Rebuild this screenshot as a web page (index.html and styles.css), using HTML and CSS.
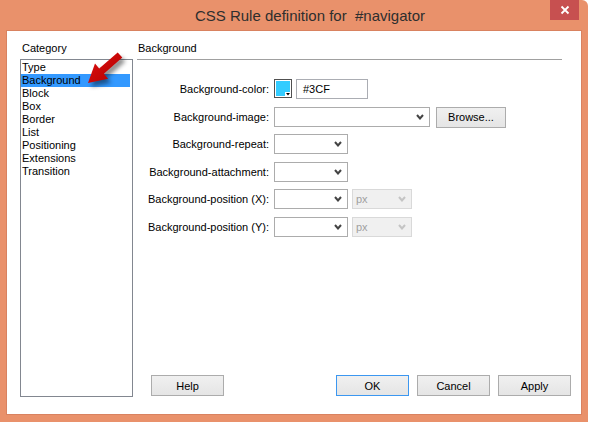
FILE: index.html
```html
<!DOCTYPE html>
<html>
<head>
<meta charset="utf-8">
<link rel="stylesheet" href="styles.css">
</head>
<body>
<div class="window">
  <div class="titlebar">
    <div class="title">CSS Rule definition for&nbsp; #navigator</div>
    <div class="close"><svg width="10" height="10" viewBox="0 0 10 10"><path d="M1.5 1.5 L8.5 8.5 M8.5 1.5 L1.5 8.5" stroke="#fff" stroke-width="1.8"/></svg></div>
  </div>
  <div class="client">
    <div class="left">
      <div class="label">Category</div>
      <ul class="list">
        <li>Type</li>
        <li class="sel">Background</li>
        <li>Block</li>
        <li>Box</li>
        <li>Border</li>
        <li>List</li>
        <li>Positioning</li>
        <li>Extensions</li>
        <li>Transition</li>
      </ul>
    </div>
    <div class="right">
      <div class="heading">Background</div>
      <div class="form">
        <div class="flabel">Background-color:</div>
        <div class="ctrls">
          <svg class="swatch" width="18" height="19" viewBox="0 0 18 19"><rect x="0.5" y="0.5" width="17" height="18" fill="#fff" stroke="#505050"/><rect x="2" y="2" width="14" height="15" fill="#33ccff"/><rect x="11" y="13" width="6" height="5" fill="#fff"/><path d="M12 14 L16 14 L14 16.5 Z" fill="#000"/></svg>
          <div class="input w72">#3CF</div>
        </div>
        <div class="flabel">Background-image:</div>
        <div class="ctrls">
          <div class="select w156"><span></span><svg width="8" height="6" viewBox="0 0 8 6"><polyline points="1,1 4,4.5 7,1" fill="none" stroke="#444" stroke-width="2"/></svg></div>
          <div class="btn browse">Browse...</div>
        </div>
        <div class="flabel">Background-repeat:</div>
        <div class="ctrls">
          <div class="select w74"><span></span><svg width="8" height="6" viewBox="0 0 8 6"><polyline points="1,1 4,4.5 7,1" fill="none" stroke="#444" stroke-width="2"/></svg></div>
        </div>
        <div class="flabel">Background-attachment:</div>
        <div class="ctrls">
          <div class="select w74"><span></span><svg width="8" height="6" viewBox="0 0 8 6"><polyline points="1,1 4,4.5 7,1" fill="none" stroke="#444" stroke-width="2"/></svg></div>
        </div>
        <div class="flabel">Background-position (X):</div>
        <div class="ctrls">
          <div class="select w74"><span></span><svg width="8" height="6" viewBox="0 0 8 6"><polyline points="1,1 4,4.5 7,1" fill="none" stroke="#444" stroke-width="2"/></svg></div>
          <div class="select w60 disabled"><span>px</span><svg width="8" height="6" viewBox="0 0 8 6"><polyline points="1,1 4,4.5 7,1" fill="none" stroke="#c4c4c4" stroke-width="2"/></svg></div>
        </div>
        <div class="flabel">Background-position (Y):</div>
        <div class="ctrls">
          <div class="select w74"><span></span><svg width="8" height="6" viewBox="0 0 8 6"><polyline points="1,1 4,4.5 7,1" fill="none" stroke="#444" stroke-width="2"/></svg></div>
          <div class="select w60 disabled"><span>px</span><svg width="8" height="6" viewBox="0 0 8 6"><polyline points="1,1 4,4.5 7,1" fill="none" stroke="#c4c4c4" stroke-width="2"/></svg></div>
        </div>
      </div>
      <div class="buttons">
        <div class="btn">Help</div>
        <div class="group">
          <div class="btn default">OK</div>
          <div class="btn">Cancel</div>
          <div class="btn">Apply</div>
        </div>
      </div>
    </div>
  </div>
  <svg class="arrow" width="50" height="46" viewBox="0 0 50 46">
    <defs>
      <linearGradient id="ag" x1="0" y1="0" x2="1" y2="1">
        <stop offset="0" stop-color="#e01010"/>
        <stop offset="1" stop-color="#b00000"/>
      </linearGradient>
    </defs>
    <polygon points="8,35 28.1,30.7 23.9,25.8 42.3,9.6 37.7,4.4 19.2,20.5 15,15.6" fill="url(#ag)"/>
  </svg>
</div>
</body>
</html>
```

FILE: styles.css
```css
body {
  margin: 0;
  background: #ffffff;
  font-family: "Liberation Sans", Arial, sans-serif;
  font-size: 11px;
  color: #000;
}

.window {
  position: relative;
  width: 588px;
  height: 422px;
  background: #e9916b;
  border-radius: 0 6px 0 0;
  display: flex;
  flex-direction: column;
}

.titlebar {
  height: 31px;
  display: flex;
  flex: none;
}

.title {
  flex: 1;
  padding-left: 70px;
  text-align: center;
  font-size: 15px;
  line-height: 32px;
  color: #2e2e2e;
}

.close {
  width: 29px;
  height: 20px;
  margin-right: 9px;
  background: #c75050;
  display: flex;
  align-items: center;
  justify-content: center;
}

.client {
  margin: 0 7px;
  height: 383px;
  box-sizing: border-box;
  background: #fff;
  box-shadow: 0 0 0 1px #d98260;
  display: flex;
  padding: 11px 10px 17px 13px;
}

.left {
  width: 113px;
  display: flex;
  flex-direction: column;
}

.label {
  line-height: 13px;
  padding-left: 2px;
}

.list {
  list-style: none;
  margin: 4px 0 0 0;
  padding: 1px 1px 1px 0;
  border: 1px solid #828790;
  flex: 1;
}

.list li {
  line-height: 13px;
  padding-left: 1px;
  margin-right: 1px;
}

.list li.sel {
  background: #3399ff;
}

.right {
  margin-left: 4px;
  flex: 1;
  display: flex;
  flex-direction: column;
}

.heading {
  line-height: 13px;
  padding: 0 0 4px 1px;
  border-bottom: 1px solid #a0a0a0;
  margin-right: 9px;
}

.form {
  margin-top: 19px;
  display: grid;
  grid-template-columns: 132px auto;
  column-gap: 5px;
  row-gap: 7.6px;
  grid-auto-rows: 20px;
}

.flabel {
  text-align: right;
  line-height: 20px;
}

.ctrls {
  display: flex;
  align-items: flex-start;
  gap: 4px;
}

.swatch {
  display: block;
}

.input {
  height: 20px;
  box-sizing: border-box;
  border: 1px solid #abadb3;
  padding-left: 6px;
  line-height: 18px;
}

.w72 { width: 72px; }
.w156 { width: 156px; }
.w74 { width: 74px; }
.w60 { width: 60px; }

.select {
  height: 20px;
  box-sizing: border-box;
  border: 1px solid #acacac;
  background: #fff;
  display: flex;
  align-items: center;
  justify-content: space-between;
  padding: 0 5px 0 3px;
}

.select svg {
  display: block;
}

.select.disabled {
  background: #f0f0f0;
  border-color: #d9d9d9;
  color: #a0a0a0;
}

.btn {
  width: 73px;
  height: 21px;
  box-sizing: border-box;
  border: 1px solid #acacac;
  background: linear-gradient(#f0f0f0, #e5e5e5);
  display: flex;
  align-items: center;
  justify-content: center;
}

.btn.browse {
  width: 70px;
  margin-left: 2px;
}

.btn.default {
  border-color: #3c97f0;
}

.buttons {
  margin-top: auto;
  margin-bottom: 1px;
  padding-left: 14px;
  display: flex;
  justify-content: space-between;
}

.group {
  display: flex;
  gap: 8px;
}

.arrow {
  position: absolute;
  left: 80px;
  top: 48px;
  filter: drop-shadow(3px 4px 2px rgba(0, 0, 0, 0.45));
}
```
